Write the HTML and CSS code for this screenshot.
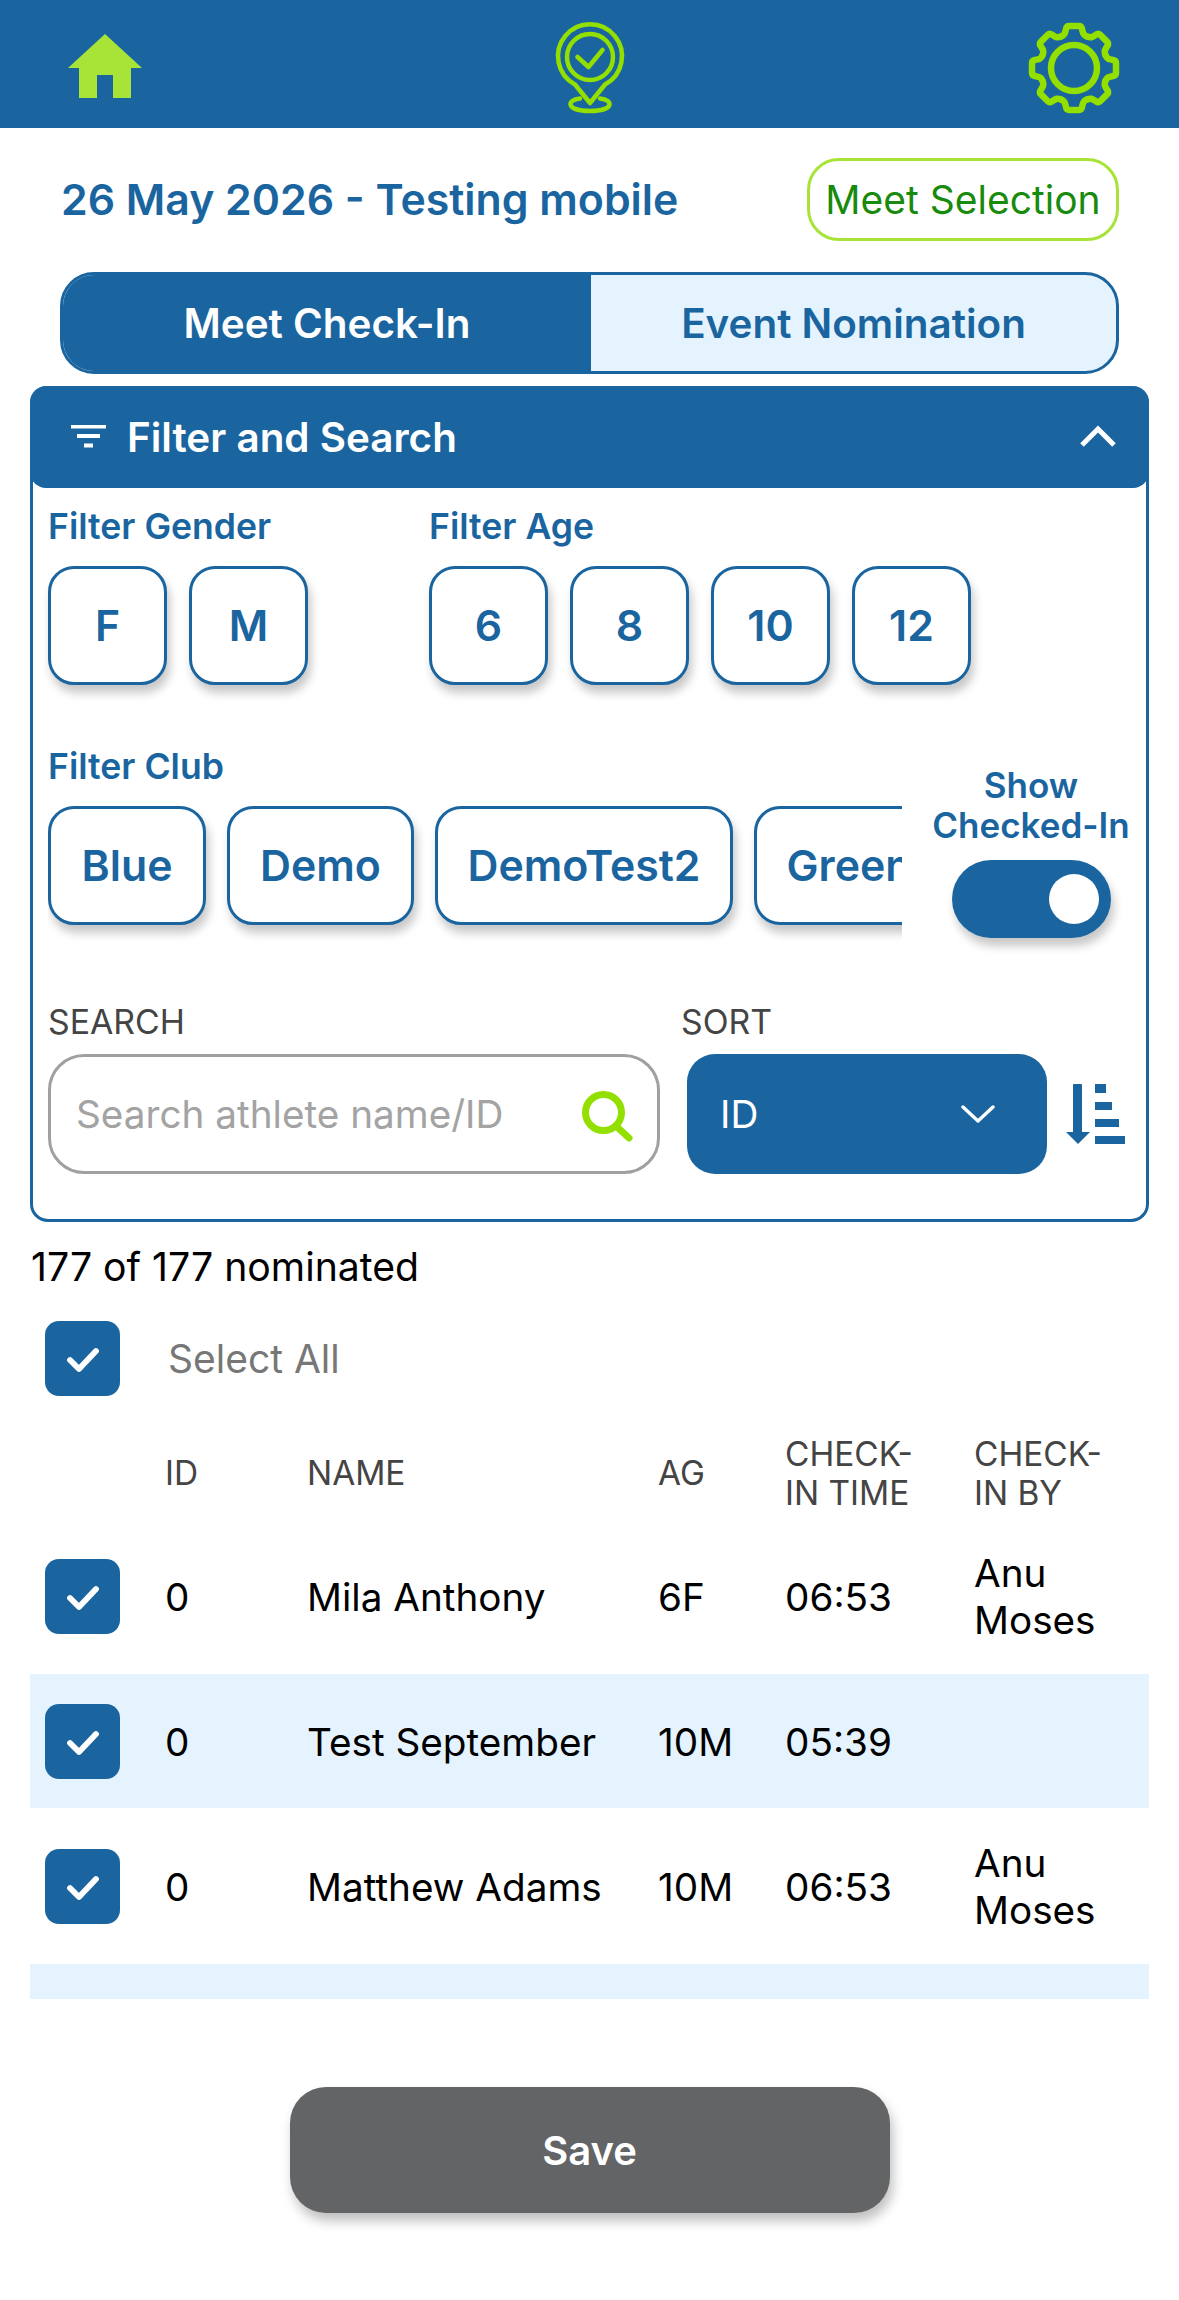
FILE: index.html
```html
<!DOCTYPE html>
<html lang="en">
<head>
<meta charset="utf-8">
<title>Meet Check-In</title>
<link rel="stylesheet" href="styles.css">
</head>
<body>
<svg class="defs" width="0" height="0" aria-hidden="true">
  <defs>
    <g id="tick"><path d="M25 39 L34 48 L51 30" fill="none" stroke="#fff" stroke-width="5.8" stroke-linecap="round" stroke-linejoin="round"/></g>
    <path id="tooth" d="M-13 -31.4 C-9 -33 -9 -35 -8 -39 Q-7.5 -42 -5 -42 H5 Q7.5 -42 8 -39 C9 -35 9 -33 13 -31.4" fill="none" stroke="#93e000" stroke-width="6.5" stroke-linecap="round" stroke-linejoin="round"/>
  </defs>
</svg>
<div class="app">
  <header class="topbar">
    <svg class="nav-icon" viewBox="0 0 120 128"><path d="M60 34 L97 68 H86 V98 H68 V75 H52 V98 H34 V68 H23 Z" fill="#a8e438"/></svg>
    <svg class="nav-icon" viewBox="0 0 120 128">
      <g fill="none" stroke="#93e000" stroke-width="4.5" stroke-linecap="round" stroke-linejoin="round">
        <path d="M60 103 L45 84.5 A32 32 0 1 1 75 84.5 Z"/>
        <circle cx="60" cy="57" r="23"/>
        <path d="M47.5 57 L58.5 67 L72.5 50"/>
        <path d="M50 98.5 C36 100 36 111 60 111 C84 111 84 100 70 98.5"/>
      </g>
    </svg>
    <svg class="nav-icon" viewBox="0 0 120 128">
      <g transform="translate(60 68)">
        <use href="#tooth"/>
        <use href="#tooth" transform="rotate(45)"/>
        <use href="#tooth" transform="rotate(90)"/>
        <use href="#tooth" transform="rotate(135)"/>
        <use href="#tooth" transform="rotate(180)"/>
        <use href="#tooth" transform="rotate(225)"/>
        <use href="#tooth" transform="rotate(270)"/>
        <use href="#tooth" transform="rotate(315)"/>
        <circle r="23" fill="none" stroke="#93e000" stroke-width="6.5"/>
      </g>
    </svg>
  </header>

  <div class="meet-row">
    <h1 class="meet-title">26 May 2026 - Testing mobile</h1>
    <button class="meet-btn">Meet Selection</button>
  </div>

  <div class="tabs">
    <div class="tab tab-active">Meet Check-In</div>
    <div class="tab">Event Nomination</div>
  </div>

  <section class="panel">
    <div class="panel-head">
      <svg class="filter-icon" viewBox="0 0 36 24"><path d="M1 1.5 H36 M7 11 H30 M14 20.5 H23" stroke="#fff" stroke-width="4" fill="none"/></svg>
      <span class="panel-title">Filter and Search</span>
      <svg class="head-chevron" viewBox="0 0 36 24"><path d="M2 20 L18 4 L34 20" fill="none" stroke="#fff" stroke-width="5"/></svg>
    </div>
    <div class="panel-body">
      <div class="filter-top">
        <div class="group group-gender">
          <div class="group-label">Filter Gender</div>
          <div class="chips">
            <div class="chip chip-square">F</div>
            <div class="chip chip-square">M</div>
          </div>
        </div>
        <div class="group">
          <div class="group-label">Filter Age</div>
          <div class="chips">
            <div class="chip chip-square">6</div>
            <div class="chip chip-square">8</div>
            <div class="chip chip-square">10</div>
            <div class="chip chip-square">12</div>
          </div>
        </div>
      </div>

      <div class="club-row">
        <div class="club-col">
          <div class="group-label">Filter Club</div>
          <div class="club-scroll">
            <div class="chip chip-blue">Blue</div>
            <div class="chip chip-demo">Demo</div>
            <div class="chip chip-demo2">DemoTest2</div>
            <div class="chip chip-green">Green</div>
          </div>
        </div>
        <div class="toggle-col">
          <div class="toggle-label">Show<br>Checked-In</div>
          <div class="toggle"><span class="knob"></span></div>
        </div>
      </div>

      <div class="search-row">
        <div class="search-col">
          <div class="field-label">SEARCH</div>
          <div class="search-box">
            <span class="placeholder">Search athlete name/ID</span>
            <svg class="search-icon" viewBox="0 0 54 58"><circle cx="24.5" cy="27.5" r="18" fill="none" stroke="#93e000" stroke-width="7"/><path d="M37 41 L50 53" stroke="#93e000" stroke-width="7" stroke-linecap="round"/></svg>
          </div>
        </div>
        <div class="sort-col">
          <div class="field-label">SORT</div>
          <div class="sort-controls">
            <div class="select">
              <span>ID</span>
              <svg class="select-chevron" viewBox="0 0 34 18"><path d="M2 2 L17 16 L32 2" fill="none" stroke="#fff" stroke-width="3.4" stroke-linecap="round" stroke-linejoin="round"/></svg>
            </div>
            <svg class="sort-icon" viewBox="0 0 60 60"><g fill="#1a659f"><rect x="7" y="0" width="9" height="50" rx="1"/><path d="M0 48 H24 L12 60 Z"/><rect x="29" y="0" width="11" height="9"/><rect x="29" y="18" width="17" height="8"/><rect x="29" y="35" width="24" height="8"/><rect x="29" y="52" width="30" height="8"/></g></svg>
          </div>
        </div>
      </div>
    </div>
  </section>

  <div class="count">177 of 177 nominated</div>

  <div class="select-all">
    <svg class="check" viewBox="0 0 75 75"><rect width="75" height="75" rx="14" fill="#1a659f"/><use href="#tick"/></svg>
    <span>Select All</span>
  </div>

  <div class="table">
    <div class="row row-head">
      <div class="cell c-check"></div>
      <div class="cell c-id">ID</div>
      <div class="cell c-name">NAME</div>
      <div class="cell c-ag">AG</div>
      <div class="cell c-time">CHECK-<br>IN TIME</div>
      <div class="cell c-by">CHECK-<br>IN BY</div>
    </div>
    <div class="row">
      <div class="cell c-check"><svg class="check" viewBox="0 0 75 75"><rect width="75" height="75" rx="14" fill="#1a659f"/><use href="#tick"/></svg></div>
      <div class="cell c-id">0</div>
      <div class="cell c-name">Mila Anthony</div>
      <div class="cell c-ag">6F</div>
      <div class="cell c-time">06:53</div>
      <div class="cell c-by">Anu<br>Moses</div>
    </div>
    <div class="row row-alt">
      <div class="cell c-check"><svg class="check" viewBox="0 0 75 75"><rect width="75" height="75" rx="14" fill="#1a659f"/><use href="#tick"/></svg></div>
      <div class="cell c-id">0</div>
      <div class="cell c-name">Test September</div>
      <div class="cell c-ag">10M</div>
      <div class="cell c-time">05:39</div>
      <div class="cell c-by"></div>
    </div>
    <div class="row">
      <div class="cell c-check"><svg class="check" viewBox="0 0 75 75"><rect width="75" height="75" rx="14" fill="#1a659f"/><use href="#tick"/></svg></div>
      <div class="cell c-id">0</div>
      <div class="cell c-name">Matthew Adams</div>
      <div class="cell c-ag">10M</div>
      <div class="cell c-time">06:53</div>
      <div class="cell c-by">Anu<br>Moses</div>
    </div>
    <div class="row-peek"></div>
  </div>

  <button class="save">Save</button>
</div>
</body>
</html>
```

FILE: styles.css
```css
* { box-sizing: border-box; }
html, body { margin: 0; padding: 0; background: #fff; }
body { font-family: Inter, "Liberation Sans", sans-serif; color: #000; }
.defs { position: absolute; }
.app { width: 1179px; height: 2300px; overflow: hidden; }

.topbar { height: 128px; background: #1a659f; display: flex; justify-content: space-between; padding: 0 45px; }
.nav-icon { width: 120px; height: 128px; display: block; }

.meet-row { display: flex; align-items: center; justify-content: space-between; padding: 30px 60px 0 61px; }
.meet-title { margin: 0; font-size: 42.8px; font-weight: 600; color: #1a659f; white-space: nowrap; }
.meet-btn { width: 312px; height: 83px; background: #fff; border: 3px solid #a8e438; border-radius: 32px; color: #188a0c; font: 400 39px Inter, sans-serif; padding: 0; }

.tabs { display: flex; height: 102px; margin: 31px 60px 0; border: 3px solid #1a659f; border-radius: 34px; overflow: hidden; background: #e4f3fe; }
.tab { flex: 1; display: flex; align-items: center; justify-content: center; font-size: 40.4px; font-weight: 600; color: #1a659f; }
.tab-active { flex: none; width: 528px; background: #1a659f; color: #fff; }

.panel { margin: 12px 30px 0; height: 836px; border: 3px solid #1a659f; border-top: 0; border-radius: 18px; }
.panel-head { height: 102px; margin: 0 -3px; background: #1a659f; border-radius: 16px; display: flex; align-items: center; padding: 0 33px 0 40px; color: #fff; }
.filter-icon { width: 36px; height: 24px; margin-right: 21px; }
.panel-title { flex: 1; font-size: 40.4px; font-weight: 600; }
.head-chevron { width: 36px; height: 24px; }
.panel-body { padding: 20px 0 0 15px; }

.filter-top { display: flex; }
.group-gender { width: 381px; }
.group-label { font-size: 35.6px; line-height: 38px; font-weight: 600; color: #1a659f; margin-bottom: 20px; }
.chips { display: flex; gap: 22px; }
.chip { flex: none; height: 119px; background: #fff; border: 3px solid #1a659f; border-radius: 26px; display: flex; align-items: center; justify-content: center; font-size: 42.8px; font-weight: 600; color: #1a659f; box-shadow: 3px 8px 10px rgba(0, 0, 0, .22); }
.chip-square { width: 119px; }
.chip-blue { width: 158px; }
.chip-demo { width: 187px; }
.chip-demo2 { width: 298px; }
.chip-green { width: 190px; }

.club-row { display: flex; margin-top: 63px; }
.club-col { width: 854px; flex: none; }
.club-scroll { display: flex; gap: 21px; overflow: hidden; padding-bottom: 24px; margin-bottom: -24px; }
.toggle-col { width: 200px; margin-left: 29px; padding-top: 17px; display: flex; flex-direction: column; align-items: center; }
.toggle-label { font-size: 35px; line-height: 40px; font-weight: 600; color: #1a659f; text-align: center; white-space: nowrap; }
.toggle { width: 159px; height: 78px; margin-top: 15px; background: #1a659f; border-radius: 39px; box-shadow: 3px 8px 10px rgba(0, 0, 0, .22); display: flex; align-items: center; justify-content: flex-end; padding-right: 12px; }
.knob { width: 50px; height: 50px; border-radius: 50%; background: #fff; }

.search-row { display: flex; margin-top: 65px; }
.search-col { width: 633px; flex: none; }
.field-label { font-size: 33.8px; line-height: 38px; color: #444; margin-bottom: 13px; }
.search-box { width: 612px; height: 120px; border: 3px solid #a0a0a0; border-radius: 36px; display: flex; align-items: center; justify-content: space-between; padding: 0 24px 0 25px; }
.placeholder { font-size: 38.7px; color: #a3a3a3; }
.search-icon { width: 54px; height: 58px; }
.sort-controls { display: flex; align-items: center; margin-left: 6px; }
.select { width: 360px; height: 120px; background: #1a659f; border-radius: 28px; color: #fff; font-size: 38.7px; display: flex; align-items: center; justify-content: space-between; padding: 0 52px 0 33px; }
.select-chevron { width: 34px; height: 18px; }
.sort-icon { width: 60px; height: 60px; margin-left: 19px; }

.count { margin: 22px 0 0 31px; font-size: 39.2px; line-height: 46px; }
.select-all { display: flex; align-items: center; gap: 48px; margin: 31px 0 0 45px; font-size: 39px; color: #777; }
.check { width: 75px; height: 75px; display: block; flex: none; }

.table { margin: 29px 30px 0; }
.row { display: flex; align-items: center; height: 156px; font-size: 38.7px; line-height: 47px; }
.row-alt { height: 134px; background: #e4f3fe; }
.row-head { height: 93px; padding-top: 2px; font-size: 33.4px; line-height: 39px; color: #444; }
.row-peek { height: 35px; background: #e4f3fe; }
.cell { padding-top: 2px; }
.c-check { width: 135px; padding: 0 0 0 15px; }
.c-id { width: 142px; }
.c-name { width: 351px; white-space: nowrap; }
.c-ag { width: 127px; }
.c-time { width: 190px; }
.c-by { width: 173px; margin-left: -1px; }

.save { display: block; width: 600px; height: 126px; margin: 88px auto 0; border: 0; border-radius: 36px; background: #636466; color: #fff; font: 600 40px Inter, sans-serif; box-shadow: 3px 8px 12px rgba(0, 0, 0, .25); }
```
